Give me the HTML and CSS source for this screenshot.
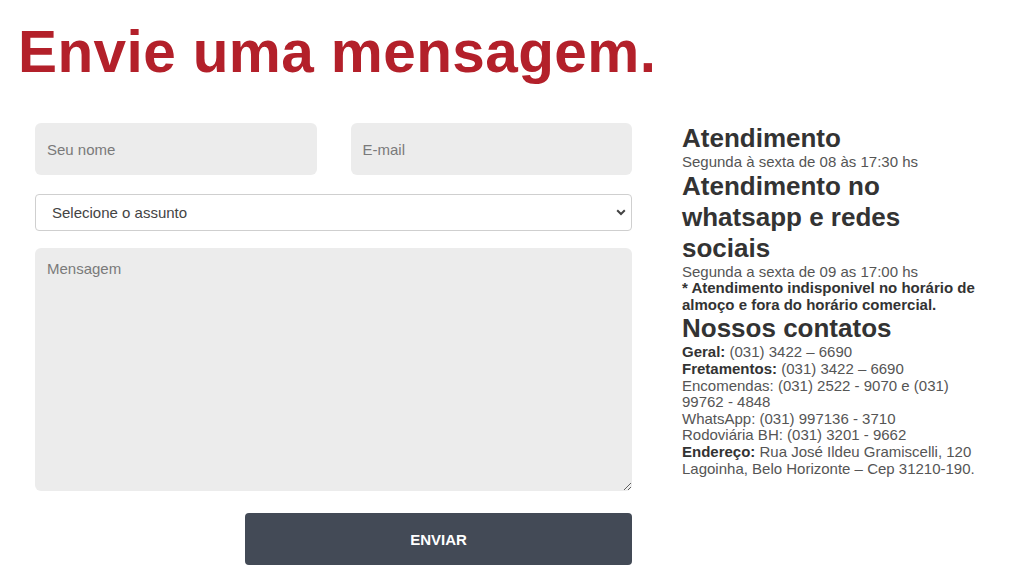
FILE: index.html
```html
<!DOCTYPE html>
<html lang="pt-BR">
<head>
<meta charset="utf-8">
<title>Envie uma mensagem</title>
<link rel="stylesheet" href="styles.css">
</head>
<body>
<h1 class="title">Envie uma mensagem.</h1>
<div class="row">
  <form class="form">
    <div class="pair">
      <input class="field" type="text" placeholder="Seu nome">
      <input class="field" type="email" placeholder="E-mail">
    </div>
    <div class="select-wrap">
      <select class="select">
        <option>Selecione o assunto</option>
      </select>
      <svg class="chev" width="10" height="7" viewBox="0 0 10 7"><path d="M1.2 1.3 L5 5 L8.8 1.3" fill="none" stroke="#444" stroke-width="2"/></svg>
    </div>
    <textarea class="message" placeholder="Mensagem"></textarea>
    <div class="actions">
      <button type="button" class="send">ENVIAR</button>
    </div>
  </form>
  <aside class="info">
    <h2 class="head">Atendimento</h2>
    <p class="txt">Segunda à sexta de 08 às 17:30 hs</p>
    <h2 class="head">Atendimento no whatsapp e redes sociais</h2>
    <p class="txt">Segunda a sexta de 09 as 17:00 hs</p>
    <p class="txt note">* Atendimento indisponivel no horário de almoço e fora do horário comercial.</p>
    <h2 class="head">Nossos contatos</h2>
    <p class="txt"><b>Geral:</b> (031) 3422 – 6690<br>
    <b>Fretamentos:</b> (031) 3422 – 6690<br>
    Encomendas: (031) 2522 - 9070 e (031) 99762 - 4848<br>
    WhatsApp: (031) 997136 - 3710<br>
    Rodoviária BH: (031) 3201 - 9662<br>
    <b>Endereço:</b> Rua José Ildeu Gramiscelli, 120 Lagoinha, Belo Horizonte – Cep 31210-190.</p>
  </aside>
</div>
</body>
</html>
```
FILE: styles.css
```css
* { box-sizing: border-box; }
html, body { margin: 0; padding: 0; background: #fff; }
body { font-family: "Liberation Sans", Arial, sans-serif; width: 1024px; }

.title {
  margin: 0;
  padding: 19px 0 0 18px;
  font-size: 58.5px;
  line-height: 66px;
  font-weight: 700;
  color: #b3202a;
  letter-spacing: 0.4px;
}

.row {
  display: flex;
  gap: 50px;
  padding: 38px 0 0 35px;
}

.form {
  width: 597px;
  display: flex;
  flex-direction: column;
}

.pair {
  display: flex;
  gap: 34px;
}

.field {
  flex: 1;
  height: 52px;
  border: none;
  border-radius: 6px;
  background: #ececec;
  padding: 0 12px;
  font-family: "Liberation Sans", Arial, sans-serif;
  font-size: 15px;
  color: #333;
  outline: none;
}
.field::placeholder, .message::placeholder { color: #7a7a7a; }

.select-wrap {
  position: relative;
  margin-top: 19px;
}
.select {
  appearance: none;
  -webkit-appearance: none;
  width: 100%;
  height: 37px;
  border: 1px solid #cfcfcf;
  border-radius: 4px;
  background: #fff;
  padding: 0 16px;
  font-family: "Liberation Sans", Arial, sans-serif;
  font-size: 15px;
  color: #444;
  outline: none;
}
.chev {
  position: absolute;
  right: 6px;
  top: 15px;
  pointer-events: none;
}

.message {
  margin-top: 17px;
  height: 243px;
  border: none;
  border-radius: 6px;
  background: #ececec;
  padding: 12px 12px;
  font-family: "Liberation Sans", Arial, sans-serif;
  font-size: 15px;
  color: #333;
  outline: none;
  resize: both;
}

.actions {
  display: flex;
  justify-content: flex-end;
  margin-top: 22px;
}
.send {
  width: 387px;
  height: 52px;
  border: none;
  border-radius: 4px;
  background: #434a56;
  color: #fff;
  font-family: "Liberation Sans", Arial, sans-serif;
  font-size: 15px;
  font-weight: 700;
  cursor: pointer;
}

.info {
  width: 302px;
}
.head {
  margin: 0;
  font-size: 26px;
  line-height: 31px;
  font-weight: 700;
  color: #333;
}
.txt {
  margin: 0;
  font-size: 15px;
  line-height: 16.6px;
  color: #555;
}
.txt b, .note { font-weight: 700; color: #333; }
```
